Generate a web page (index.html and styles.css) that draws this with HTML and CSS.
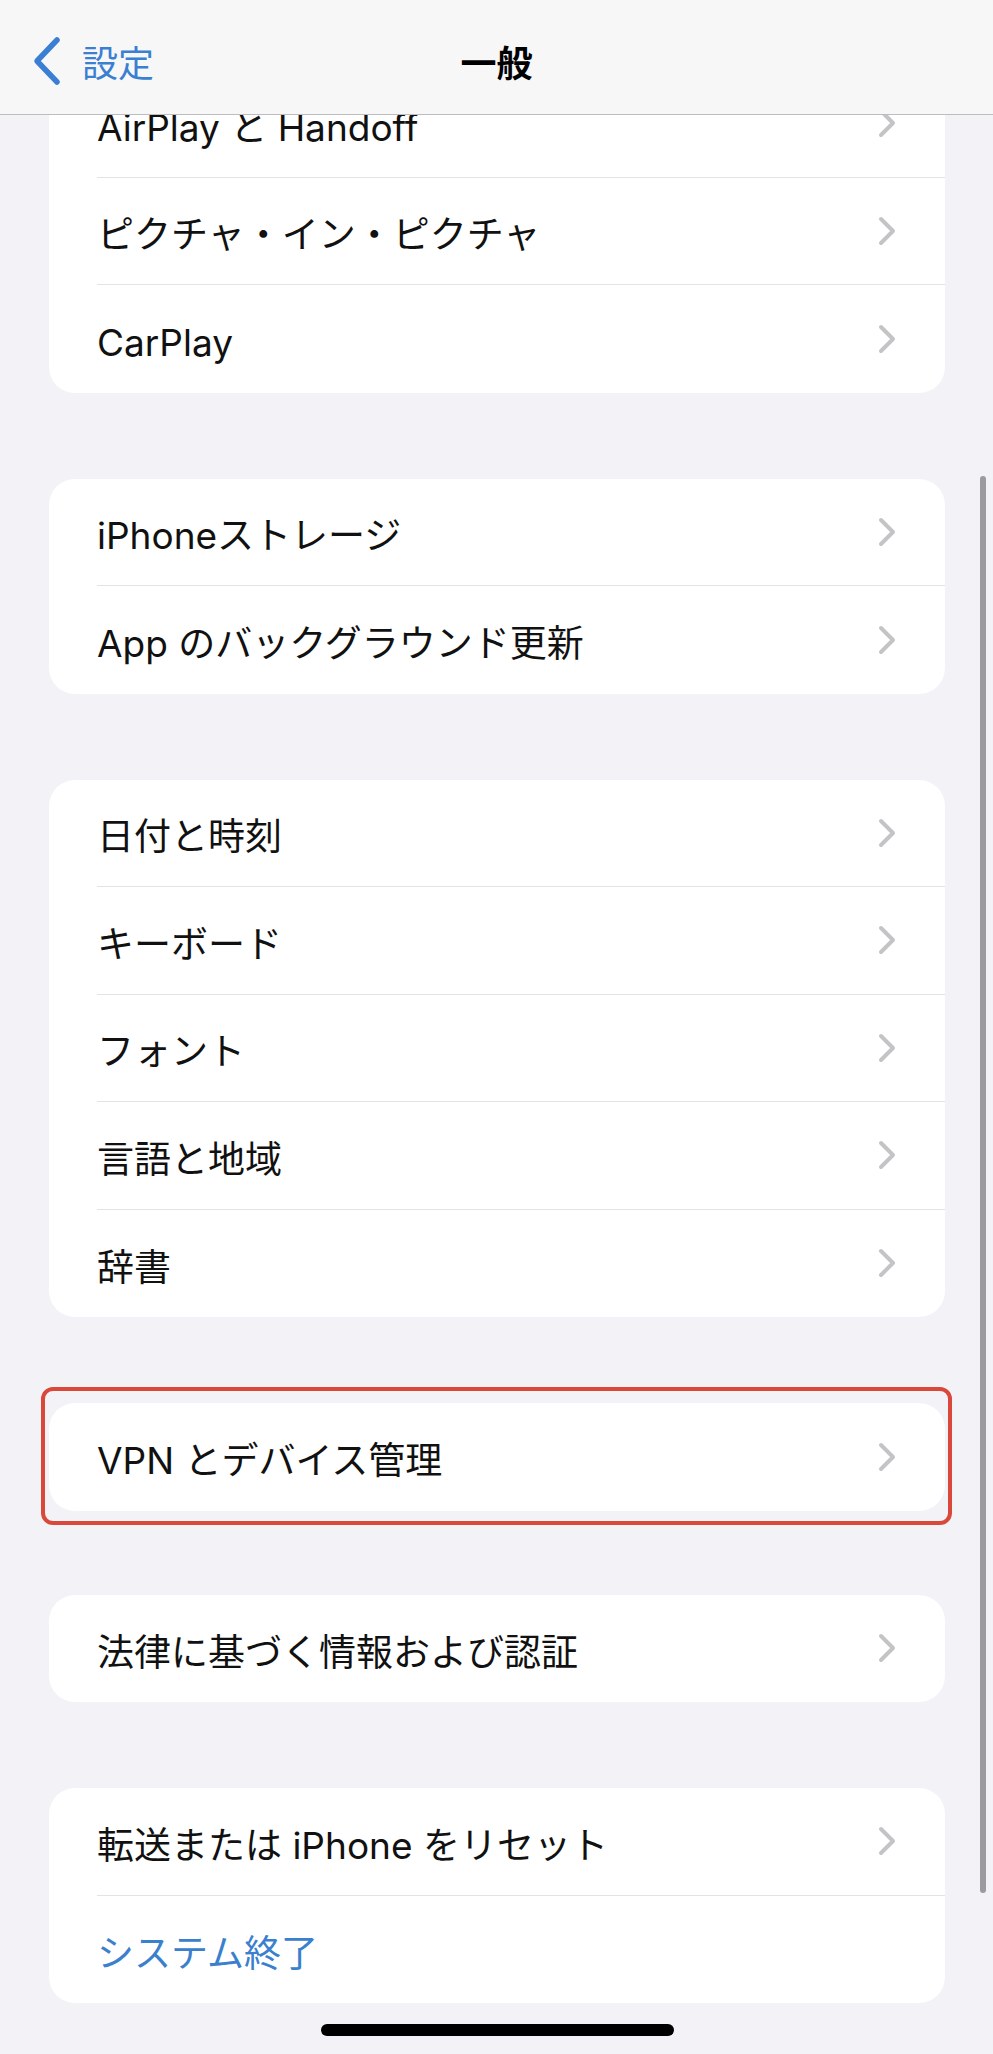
FILE: index.html
```html
<!DOCTYPE html>
<html lang="ja">
    <head>
        <meta charset="UTF-8">
        <meta name="viewport" content="width=device-width, initial-scale=1.0">
        <title>一般</title>
        <link rel="stylesheet" href="styles.css">
    </head>
    <body>
        <div class="screen">
            <!-- Навигация поверх списка -->
            <header class="nav">
                <a class="nav-back" href="#">
                    <svg class="nav-back-icon" width="30" height="50" viewBox="0 0 30 50">
                        <path d="M25 4 L5 25 L25 46" fill="none" stroke="currentColor" stroke-width="5.5" stroke-linecap="round" stroke-linejoin="round"/>
                    </svg>
                    <span>設定</span>
                </a>
                <h1 class="nav-title">一般</h1>
                <div></div>
            </header>

            <main class="list">
                <section class="group">
                    <div class="row"><div class="row-inner"><span>AirPlay と Handoff</span><svg class="chevron" width="20" height="32" viewBox="0 0 20 32"><path d="M4 4 L16 16 L4 28"/></svg></div></div>
                    <div class="row"><div class="row-inner"><span>ピクチャ・イン・ピクチャ</span><svg class="chevron" width="20" height="32" viewBox="0 0 20 32"><path d="M4 4 L16 16 L4 28"/></svg></div></div>
                    <div class="row"><div class="row-inner"><span>CarPlay</span><svg class="chevron" width="20" height="32" viewBox="0 0 20 32"><path d="M4 4 L16 16 L4 28"/></svg></div></div>
                </section>

                <section class="group">
                    <div class="row"><div class="row-inner"><span>iPhoneストレージ</span><svg class="chevron" width="20" height="32" viewBox="0 0 20 32"><path d="M4 4 L16 16 L4 28"/></svg></div></div>
                    <div class="row"><div class="row-inner"><span>App のバックグラウンド更新</span><svg class="chevron" width="20" height="32" viewBox="0 0 20 32"><path d="M4 4 L16 16 L4 28"/></svg></div></div>
                </section>

                <section class="group">
                    <div class="row"><div class="row-inner"><span>日付と時刻</span><svg class="chevron" width="20" height="32" viewBox="0 0 20 32"><path d="M4 4 L16 16 L4 28"/></svg></div></div>
                    <div class="row"><div class="row-inner"><span>キーボード</span><svg class="chevron" width="20" height="32" viewBox="0 0 20 32"><path d="M4 4 L16 16 L4 28"/></svg></div></div>
                    <div class="row"><div class="row-inner"><span>フォント</span><svg class="chevron" width="20" height="32" viewBox="0 0 20 32"><path d="M4 4 L16 16 L4 28"/></svg></div></div>
                    <div class="row"><div class="row-inner"><span>言語と地域</span><svg class="chevron" width="20" height="32" viewBox="0 0 20 32"><path d="M4 4 L16 16 L4 28"/></svg></div></div>
                    <div class="row"><div class="row-inner"><span>辞書</span><svg class="chevron" width="20" height="32" viewBox="0 0 20 32"><path d="M4 4 L16 16 L4 28"/></svg></div></div>
                </section>

                <div class="highlight">
                    <section class="group">
                        <div class="row"><div class="row-inner"><span>VPN とデバイス管理</span><svg class="chevron" width="20" height="32" viewBox="0 0 20 32"><path d="M4 4 L16 16 L4 28"/></svg></div></div>
                    </section>
                </div>

                <section class="group">
                    <div class="row"><div class="row-inner"><span>法律に基づく情報および認証</span><svg class="chevron" width="20" height="32" viewBox="0 0 20 32"><path d="M4 4 L16 16 L4 28"/></svg></div></div>
                </section>

                <section class="group">
                    <div class="row"><div class="row-inner"><span>転送または iPhone をリセット</span><svg class="chevron" width="20" height="32" viewBox="0 0 20 32"><path d="M4 4 L16 16 L4 28"/></svg></div></div>
                    <div class="row row-action"><div class="row-inner"><span>システム終了</span></div></div>
                </section>

                <div class="home-indicator"></div>
            </main>

            <div class="scrollbar"></div>
        </div>
    </body>
</html>
```

FILE: styles.css
```css
body {
    margin: 0;
    background-color: #f2f2f7;
    font-family: Inter, "Noto Sans CJK JP", sans-serif;
    color: #111;
}
.screen {
    position: relative;
    width: 993px;
    height: 2054px;
    overflow: hidden;
}
.nav {
    position: absolute;
    top: 0;
    left: 0;
    right: 0;
    z-index: 2;
    height: 115px;
    box-sizing: border-box;
    padding: 7px 32px 0 32px;
    display: grid;
    grid-template-columns: 1fr auto 1fr;
    align-items: center;
    background-color: #f7f7f8;
    border-bottom: 1px solid #bdbdc0;
}
.nav-back {
    display: flex;
    align-items: center;
    gap: 20px;
    color: #3a7fd2;
    text-decoration: none;
    font-family: "Noto Sans CJK JP", sans-serif;
    font-size: 36px;
    line-height: 1;
}
.nav-title {
    margin: 0;
    font-family: "Noto Sans CJK JP", sans-serif;
    font-size: 36px;
    font-weight: 700;
    line-height: 1;
    color: #000;
}
.list {
    padding: 70px 48px 0 49px;
}
.group {
    background-color: #fff;
    border-radius: 26px;
    margin-bottom: 86px;
    overflow: hidden;
}
.row {
    height: 107.5px;
    padding-left: 48px;
}
.row-inner {
    height: 100%;
    box-sizing: border-box;
    display: flex;
    align-items: center;
    justify-content: space-between;
    padding: 0 48px 0 0;
    border-bottom: 1px solid #e3e3e6;
    font-size: 37px;
    line-height: 1.2;
}
.row-inner span {
    padding-top: 9px;
}
.row:last-child .row-inner {
    border-bottom: none;
}
.row-action {
    color: #3b80cd;
}
.chevron {
    fill: none;
    stroke: #c4c4c7;
    stroke-width: 4;
    stroke-linecap: round;
    stroke-linejoin: round;
}
.highlight {
    margin: -16px -7px 70px -8px;
    padding: 12px 3px 10px 4px;
    border: 4px solid #d9483a;
    border-radius: 12px;
}
.highlight .group {
    margin-bottom: 0;
}
.home-indicator {
    width: 353px;
    height: 12px;
    margin: -65px auto 0;
    border-radius: 6px;
    background-color: #000;
}
.scrollbar {
    position: absolute;
    left: 980px;
    top: 476px;
    width: 6px;
    height: 1417px;
    border-radius: 3px;
    background-color: #9b9b9f;
}
```
